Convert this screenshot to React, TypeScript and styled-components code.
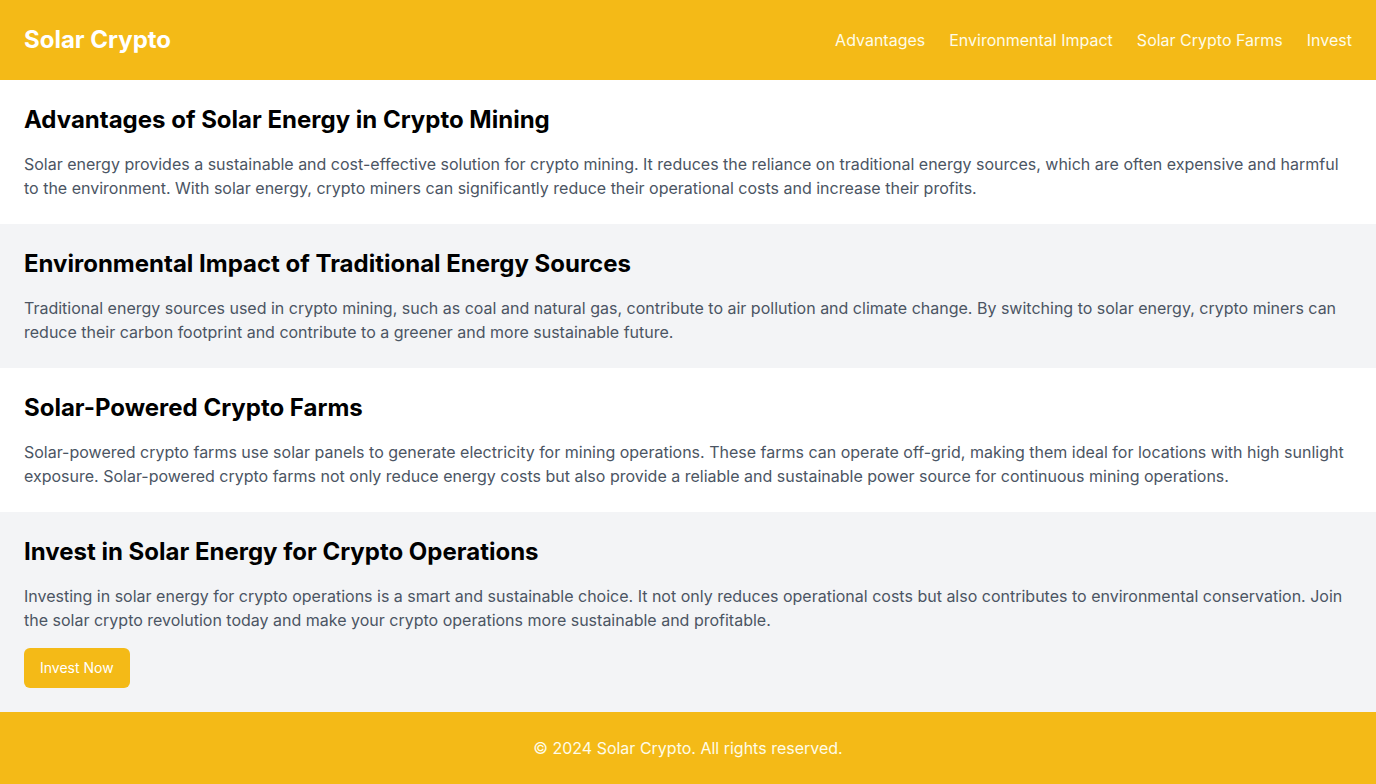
import React from "react";
import styled, { createGlobalStyle } from "styled-components";

const Global = createGlobalStyle`
  * { box-sizing: border-box; }
  body { margin: 0; font-family: Inter, "Liberation Sans", sans-serif; background: #fff; }
  h1, h2, p { margin: 0; }
`;

const YELLOW = "#F4BA17";

const Header = styled.header`
  display: flex;
  align-items: center;
  justify-content: space-between;
  background: ${YELLOW};
  padding: 24px;
  height: 80px;
`;

const Brand = styled.h1`
  font-size: 24px;
  line-height: 32px;
  font-weight: 700;
  color: #fff;
`;

const Nav = styled.nav`
  display: flex;
  gap: 24px;
`;

const NavLink = styled.a`
  color: #fefce8;
  font-size: 16px;
  line-height: 24px;
  text-decoration: none;
`;

const Section = styled.section<{ $alt?: boolean }>`
  background: ${(p) => (p.$alt ? "#F3F4F6" : "#fff")};
  padding: 24px;
`;

const Title = styled.h2`
  font-size: 24px;
  line-height: 32px;
  font-weight: 700;
  color: #000;
  margin-bottom: 16px;
`;

const Text = styled.p`
  font-size: 16px;
  line-height: 24px;
  color: #4B5563;
`;

const Button = styled.button`
  margin-top: 16px;
  background: ${YELLOW};
  color: #fff;
  border: none;
  border-radius: 6px;
  padding: 8px 16px;
  font-family: Inter, "Liberation Sans", sans-serif;
  font-size: 14px;
  line-height: 24px;
  height: 40px;
  cursor: pointer;
`;

const Footer = styled.footer`
  background: ${YELLOW};
  padding: 24px;
  text-align: center;
  color: #fefce8;
  font-size: 16px;
  line-height: 24px;
`;

export default function App() {
  return (
    <>
      <Global />
      <Header>
        <Brand>Solar Crypto</Brand>
        <Nav>
          <NavLink href="#advantages">Advantages</NavLink>
          <NavLink href="#impact">Environmental Impact</NavLink>
          <NavLink href="#farms">Solar Crypto Farms</NavLink>
          <NavLink href="#invest">Invest</NavLink>
        </Nav>
      </Header>
      <Section id="advantages">
        <Title>Advantages of Solar Energy in Crypto Mining</Title>
        <Text>
          Solar energy provides a sustainable and cost-effective solution for crypto mining. It reduces the reliance on traditional energy sources, which are often expensive and harmful to the environment. With solar energy, crypto miners can significantly reduce their operational costs and increase their profits.
        </Text>
      </Section>
      <Section id="impact" $alt>
        <Title>Environmental Impact of Traditional Energy Sources</Title>
        <Text>
          Traditional energy sources used in crypto mining, such as coal and natural gas, contribute to air pollution and climate change. By switching to solar energy, crypto miners can reduce their carbon footprint and contribute to a greener and more sustainable future.
        </Text>
      </Section>
      <Section id="farms">
        <Title>Solar-Powered Crypto Farms</Title>
        <Text>
          Solar-powered crypto farms use solar panels to generate electricity for mining operations. These farms can operate off-grid, making them ideal for locations with high sunlight exposure. Solar-powered crypto farms not only reduce energy costs but also provide a reliable and sustainable power source for continuous mining operations.
        </Text>
      </Section>
      <Section id="invest" $alt>
        <Title>Invest in Solar Energy for Crypto Operations</Title>
        <Text>
          Investing in solar energy for crypto operations is a smart and sustainable choice. It not only reduces operational costs but also contributes to environmental conservation. Join the solar crypto revolution today and make your crypto operations more sustainable and profitable.
        </Text>
        <Button>Invest Now</Button>
      </Section>
      <Footer>© 2024 Solar Crypto. All rights reserved.</Footer>
    </>
  );
}
